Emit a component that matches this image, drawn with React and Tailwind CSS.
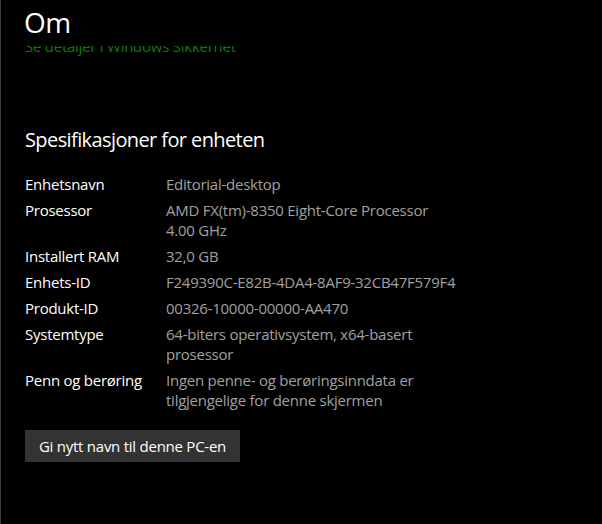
export default function App() {
  const rows = [
    ["Enhetsnavn", ["Editorial-desktop"]],
    ["Prosessor", ["AMD FX(tm)-8350 Eight-Core Processor", "4.00 GHz"]],
    ["Installert RAM", ["32,0 GB"]],
    ["Enhets-ID", ["F249390C-E82B-4DA4-8AF9-32CB47F579F4"]],
    ["Produkt-ID", ["00326-10000-00000-AA470"]],
    ["Systemtype", ["64-biters operativsystem, x64-basert", "prosessor"]],
    ["Penn og berøring", ["Ingen penne- og berøringsinndata er", "tilgjengelige for denne skjermen"]],
  ];
  return (
    <div className="w-[602px] h-[524px] bg-black border-l border-[#3c3c3c] flex flex-col overflow-hidden" style={{ fontFamily: '"Open Sans", "Noto Sans", sans-serif' }}>
      <div className="h-[46px] shrink-0 pl-[23px] pt-[4px]">
        <h1 className="text-[28px] leading-[36px] text-white tracking-[-0.5px]">Om</h1>
      </div>
      <div className="flex-1 overflow-hidden">
        <div className="-mt-[10px] pl-[24px] tracking-[-0.25px]">
          <div className="text-[15px] leading-[20px] text-[#0f7b0f]">Se detaljer i Windows Sikkerhet</div>
          <h2 className="mt-[70px] text-[20px] leading-[28px] text-white tracking-[-0.6px]">Spesifikasjoner for enheten</h2>
          <div className="mt-[20px] flex flex-col gap-[6px] text-[15px] leading-[20px]">
            {rows.map(([k, v]) => (
              <div key={k} className="flex">
                <div className="w-[141px] shrink-0 text-white">{k}</div>
                <div className="text-[#a0a0a0]">
                  {v.map((l) => (
                    <div key={l}>{l}</div>
                  ))}
                </div>
              </div>
            ))}
          </div>
          <button className="mt-[20px] h-[32px] w-[215px] bg-[#333333] text-white text-[15px] leading-[20px]">Gi nytt navn til denne PC-en</button>
        </div>
      </div>
    </div>
  );
}
